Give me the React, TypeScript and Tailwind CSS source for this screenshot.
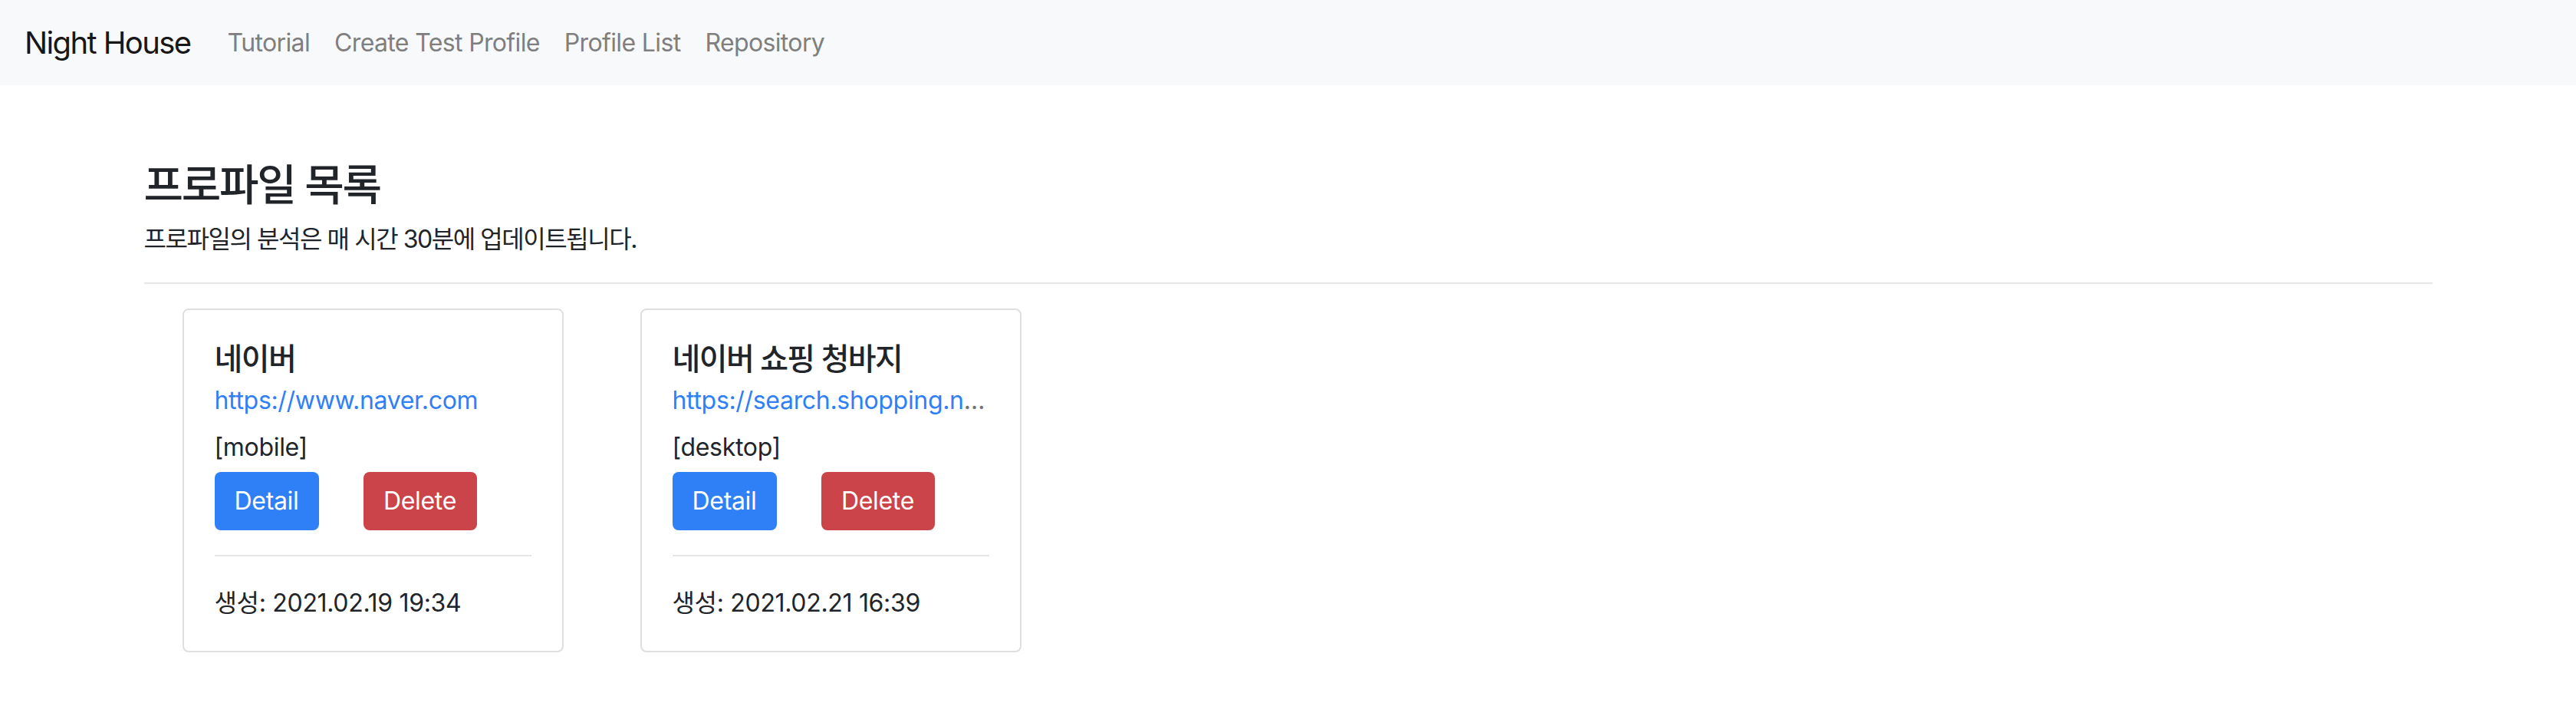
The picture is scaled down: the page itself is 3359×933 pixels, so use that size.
import React from 'react';

type Profile = {
  name: string;
  url: string;
  device: string;
  created: string;
};

const profiles: Profile[] = [
  { name: '네이버', url: 'https://www.naver.com', device: 'mobile', created: '2021.02.19 19:34' },
  {
    name: '네이버 쇼핑 청바지',
    url: 'https://search.shopping.naver.com/search/all?query=청바지',
    device: 'desktop',
    created: '2021.02.21 16:39',
  },
];

const font = { fontFamily: 'Inter, "Noto Sans CJK KR", sans-serif' };

function NavBar() {
  const links = ['Tutorial', 'Create Test Profile', 'Profile List', 'Repository'];
  return (
    <nav className="flex h-[111px] items-center bg-[#f8f9fa] px-8">
      <a className="mr-8 text-[40px] leading-[60px] tracking-[-0.04em] text-[#171717]" href="#">
        Night House
      </a>
      <div className="flex">
        {links.map(l => (
          <a key={l} href="#" className="px-4 text-[32px] leading-[48px] tracking-[-0.02em] text-[#7f7f7f]">
            {l}
          </a>
        ))}
      </div>
    </nav>
  );
}

function ProfileCard({ p }: { p: Profile }) {
  return (
    <div className="w-[497px] rounded-[8px] border-2 border-[#dfdfdf] bg-white px-10 pt-10 pb-[38px]">
      <h5 className="mb-[6px] text-[40px] leading-[48px] font-medium tracking-[-0.04em] text-[#212529]">
        {p.name}
      </h5>
      <p className="mb-[13px] truncate text-[32px] leading-[48px] tracking-[-0.01em] text-[#6c757d]">
        <a href="#" className="text-[#2f7ff6]">
          {p.url}
        </a>
      </p>
      <p className="mb-[8px] text-[32px] leading-[48px] tracking-[-0.01em] text-[#212529]">[{p.device}]</p>
      <div className="flex gap-[58px]">
        <button className="h-[76px] w-[136px] rounded-[8px] bg-[#2f7ff6] text-[32px] tracking-[-0.01em] text-white">
          Detail
        </button>
        <button className="h-[76px] w-[148px] rounded-[8px] bg-[#cb444a] text-[32px] tracking-[-0.01em] text-white">
          Delete
        </button>
      </div>
      <hr className="mt-8 mb-[37px] border-t-2 border-[#e6e6e6]" />
      <p className="text-[32px] leading-[48px] tracking-[-0.01em] text-[#212529]">생성: {p.created}</p>
    </div>
  );
}

export default function App() {
  return (
    <div className="min-h-screen bg-white" style={font}>
      <NavBar />
      <main className="mx-auto w-[2984px] pt-[97px]">
        <h3 className="mb-[13px] text-[56px] leading-[67px] font-medium tracking-[-0.04em] text-[#212529]">
          프로파일 목록
        </h3>
        <p className="mb-8 text-[32px] leading-[48px] tracking-[-0.045em] text-[#212529]">
          프로파일의 분석은 매 시간 30분에 업데이트됩니다.
        </p>
        <hr className="mb-8 border-t-2 border-[#e6e6e6]" />
        <div className="flex gap-[100px] pl-[50px]">
          {profiles.map(p => (
            <ProfileCard key={p.name} p={p} />
          ))}
        </div>
      </main>
    </div>
  );
}
